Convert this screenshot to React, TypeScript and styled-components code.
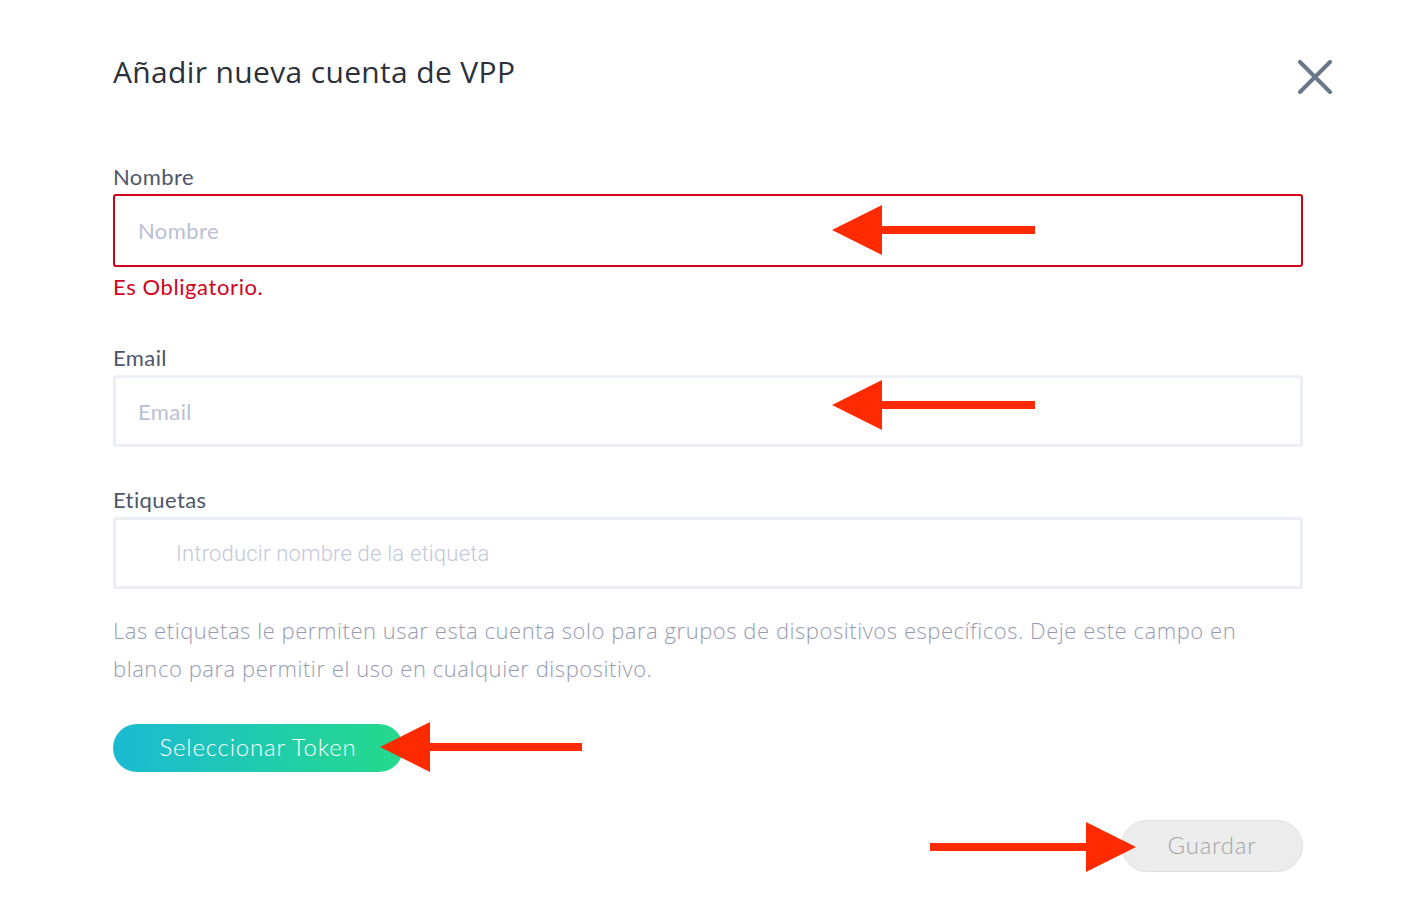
import React from 'react'
import styled, { createGlobalStyle } from 'styled-components'

const GlobalStyle = createGlobalStyle`
  html, body {
    margin: 0;
    padding: 0;
    background: #ffffff;
  }
  body {
    font-family: Lato, 'Open Sans', sans-serif;
  }
`

const Modal = styled.div`
  position: relative;
  width: 1414px;
  height: 906px;
  box-sizing: border-box;
  padding: 50px 111px 0 113px;
  background: #ffffff;
`

const Header = styled.div`
  display: flex;
  align-items: flex-start;
  justify-content: space-between;
  margin-right: -32px;
`

const Title = styled.h2`
  margin: 0;
  font-family: 'Open Sans', sans-serif;
  font-weight: 400;
  font-size: 30px;
  line-height: 44px;
  letter-spacing: 0.35px;
  color: #2b303b;
`

const CloseButton = styled.button`
  display: flex;
  align-items: center;
  justify-content: center;
  width: 40px;
  height: 40px;
  margin-top: 7px;
  padding: 0;
  border: none;
  background: none;
  cursor: pointer;
`

const Form = styled.form`
  display: flex;
  flex-direction: column;
  margin-top: 67px;
`

const Field = styled.div<{ $gap?: number }>`
  display: flex;
  flex-direction: column;
  margin-bottom: ${(p) => p.$gap ?? 0}px;
`

const Label = styled.label`
  font-size: 22px;
  line-height: 26px;
  letter-spacing: 0.4px;
  color: #4d566b;
  margin-bottom: 4px;
`

const Input = styled.input<{ $error?: boolean; $indent?: number }>`
  box-sizing: border-box;
  width: 100%;
  height: ${(p) => (p.$error ? 73 : 72)}px;
  padding: 0 0 0 ${(p) => p.$indent ?? 24}px;
  border: ${(p) => (p.$error ? '2px solid #d0021b' : '3px solid #eceff6')};
  border-radius: 3px;
  font-family: Lato, sans-serif;
  font-size: 22px;
  letter-spacing: 0.4px;
  color: #2b303b;
  outline: none;

  &::placeholder {
    color: #b9bfd5;
  }
`

const TagInput = styled(Input)`
  font-family: Roboto, 'Liberation Sans', sans-serif;
  font-weight: 300;
  font-size: 22px;
  letter-spacing: 0.2px;

  &::placeholder {
    color: #c3c8da;
  }
`

const ErrorText = styled.div`
  margin-top: 7px;
  font-size: 22px;
  line-height: 26px;
  letter-spacing: 0.6px;
  color: #d0021b;
`

const HelpText = styled.p`
  margin: 22px 0 0;
  max-width: 1150px;
  font-family: 'Open Sans', sans-serif;
  font-weight: 300;
  font-size: 22px;
  line-height: 38px;
  letter-spacing: 0.55px;
  color: #959bb1;
`

const TokenButton = styled.button`
  align-self: flex-start;
  margin-top: 37px;
  width: 290px;
  height: 48px;
  padding: 0 0 4px;
  border: none;
  border-radius: 24px;
  background: linear-gradient(90deg, #1bbad3 0%, #25da8a 100%);
  font-family: Lato, sans-serif;
  font-size: 24px;
  font-weight: 300;
  letter-spacing: 0.8px;
  color: #ffffff;
  cursor: pointer;
`

const Footer = styled.div`
  display: flex;
  justify-content: flex-end;
  margin-top: 48px;
`

const SaveButton = styled.button`
  width: 182px;
  height: 52px;
  padding: 0 0 4px;
  border: 1px solid #e0e0e0;
  border-radius: 26px;
  background: #ececec;
  font-family: Lato, sans-serif;
  font-size: 24px;
  font-weight: 300;
  letter-spacing: 0.8px;
  color: #a4a4a4;
`

/* red annotation arrows laid over the form */
const ArrowMark = styled.svg`
  position: absolute;
  overflow: visible;
`

const Arrow: React.FC<{ x: number; y: number; len: number; dir: 'left' | 'right' }> = ({
  x,
  y,
  len,
  dir,
}) => {
  const head = 50
  const shape =
    dir === 'left'
      ? `M0 25 L${head} 0 L${head} 21 L${len} 21 L${len} 29 L${head} 29 L${head} 50 Z`
      : `M${len} 25 L${len - head} 0 L${len - head} 21 L0 21 L0 29 L${len - head} 29 L${len - head} 50 Z`
  return (
    <ArrowMark width={len} height={50} style={{ left: x, top: y - 25 }}>
      <path d={shape} fill="#ff2a00" />
    </ArrowMark>
  )
}

const CloseIcon = () => (
  <svg width="34" height="34" viewBox="0 0 34 34">
    <path d="M2 2 L32 32 M32 2 L2 32" stroke="#687789" strokeWidth="4" strokeLinecap="round" />
  </svg>
)

export default function App() {
  return (
    <>
      <GlobalStyle />
      <Modal>
        <Header>
          <Title>Añadir nueva cuenta de VPP</Title>
          <CloseButton aria-label="Cerrar">
            <CloseIcon />
          </CloseButton>
        </Header>
        <Form onSubmit={(e) => e.preventDefault()}>
          <Field $gap={45}>
            <Label htmlFor="nombre">Nombre</Label>
            <Input id="nombre" placeholder="Nombre" $error $indent={23} />
            <ErrorText>Es Obligatorio.</ErrorText>
          </Field>
          <Field $gap={40}>
            <Label htmlFor="email">Email</Label>
            <Input id="email" placeholder="Email" $indent={22} />
          </Field>
          <Field>
            <Label htmlFor="tags">Etiquetas</Label>
            <TagInput id="tags" placeholder="Introducir nombre de la etiqueta" $indent={60} />
          </Field>
          <HelpText>
            Las etiquetas le permiten usar esta cuenta solo para grupos de dispositivos específicos. Deje este campo en
            blanco para permitir el uso en cualquier dispositivo.
          </HelpText>
          <TokenButton type="button">Seleccionar Token</TokenButton>
          <Footer>
            <SaveButton type="submit" disabled>
              Guardar
            </SaveButton>
          </Footer>
        </Form>
        <Arrow x={832} y={230} len={203} dir="left" />
        <Arrow x={832} y={405} len={203} dir="left" />
        <Arrow x={380} y={747} len={202} dir="left" />
        <Arrow x={930} y={847} len={206} dir="right" />
      </Modal>
    </>
  )
}
